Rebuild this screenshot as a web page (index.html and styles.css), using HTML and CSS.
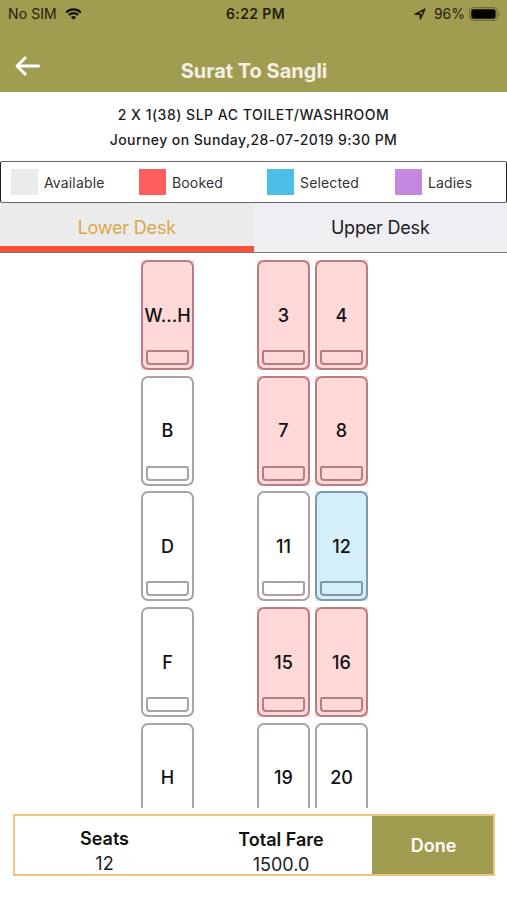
FILE: index.html
```html
<!DOCTYPE html>
<html lang="en">
<head>
    <meta charset="UTF-8" />
    <meta name="viewport" content="width=device-width, initial-scale=1.0" />
    <title>Surat To Sangli</title>
    <link rel="stylesheet" href="styles.css">
</head>
<body>
<div class="header">
    <div class="status-bar">
        <div class="status-left">
            <span class="carrier">No SIM</span>
            <svg class="wifi" viewBox="0 0 17 12" width="17" height="12">
                <path d="M1.2 4.4a10.4 10.4 0 0 1 14.6 0M3.8 7.1a6.7 6.7 0 0 1 9.4 0" fill="none" stroke="#11110a" stroke-width="2.1"/>
                <path d="M8.5 11.8L5.9 9.2a3.7 3.7 0 0 1 5.2 0z" fill="#11110a"/>
            </svg>
        </div>
        <div class="clock">6:22 PM</div>
        <div class="status-right">
            <svg class="location" viewBox="0 0 12 12" width="12" height="12">
                <path d="M1.2 6.1L10.8 1.2 6.4 10.8 6.1 6.1z" fill="none" stroke="#22220f" stroke-width="1.6" stroke-linejoin="round"/>
            </svg>
            <span class="percent">96%</span>
            <svg class="battery" viewBox="0 0 32 14" width="32" height="14">
                <rect x=".6" y=".6" width="27.6" height="12.8" rx="3.6" fill="none" stroke="#6f6c38" stroke-width="1.1"/>
                <rect x="2.2" y="2.3" width="24.4" height="9.4" rx="2" fill="#050503"/>
                <path d="M29.5 4.7a2.5 2.5 0 0 1 0 4.6z" fill="#6f6c38"/>
            </svg>
        </div>
    </div>
    <div class="nav-bar">
        <svg class="back" viewBox="0 0 26 20" width="26" height="20">
            <path d="M23.6 10H2.6M10.2 1.9L2 10l8.2 8.1" fill="none" stroke="#fff" stroke-width="2.9" stroke-linecap="round" stroke-linejoin="round"/>
        </svg>
        <h1>Surat To Sangli</h1>
    </div>
</div>

<div class="trip">
    <p class="bus-type">2 X 1(38) SLP AC TOILET/WASHROOM</p>
    <p class="journey">Journey on Sunday,28-07-2019 9:30 PM</p>
</div>

<div class="legend">
    <div class="legend-item"><span class="swatch available"></span>Available</div>
    <div class="legend-item"><span class="swatch booked"></span>Booked</div>
    <div class="legend-item"><span class="swatch selected"></span>Selected</div>
    <div class="legend-item"><span class="swatch ladies"></span>Ladies</div>
</div>

<div class="tabs">
    <div class="tab active">Lower Desk</div>
    <div class="tab">Upper Desk</div>
</div>

<div class="deck">
    <div class="seats">
        <div class="seat is-booked"><span>W...H</span></div>
        <div class="aisle"></div>
        <div class="seat is-booked"><span>3</span></div>
        <div class="seat is-booked"><span>4</span></div>

        <div class="seat"><span>B</span></div>
        <div class="aisle"></div>
        <div class="seat is-booked"><span>7</span></div>
        <div class="seat is-booked"><span>8</span></div>

        <div class="seat"><span>D</span></div>
        <div class="aisle"></div>
        <div class="seat"><span>11</span></div>
        <div class="seat is-selected"><span>12</span></div>

        <div class="seat"><span>F</span></div>
        <div class="aisle"></div>
        <div class="seat is-booked"><span>15</span></div>
        <div class="seat is-booked"><span>16</span></div>

        <div class="seat"><span>H</span></div>
        <div class="aisle"></div>
        <div class="seat"><span>19</span></div>
        <div class="seat"><span>20</span></div>
    </div>
</div>

<div class="summary">
    <div class="summary-item seats-count">
        <strong>Seats</strong>
        <span>12</span>
    </div>
    <div class="summary-item fare">
        <strong>Total Fare</strong>
        <span>1500.0</span>
    </div>
    <button type="button" class="done-btn">Done</button>
</div>
</body>
</html>
```
FILE: styles.css
```css
*,
*::before,
*::after {
    box-sizing: border-box;
    margin: 0;
    padding: 0;
}

body {
    width: 507px;
    height: 900px;
    overflow: hidden;
    font-family: Inter, "Liberation Sans", sans-serif;
    background: #fff;
    color: #1c1c1e;
}

svg {
    display: block;
}

/* Header */
.header {
    height: 92px;
    background: #a09c50;
}

.status-bar {
    display: grid;
    grid-template-columns: 1fr auto 1fr;
    align-items: center;
    height: 27px;
    padding: 0 6px 0 8px;
    font-size: 14px;
    color: #22220f;
}

.status-left,
.status-right {
    display: flex;
    align-items: center;
}

.status-left {
    gap: 8px;
}

.carrier {
    letter-spacing: 0.1px;
}

.status-right {
    justify-content: flex-end;
}

.location {
    margin-right: 8px;
}

.battery {
    margin-left: 4px;
}

.clock {
    padding-left: 2px;
    font-weight: 600;
    letter-spacing: 0.4px;
}

.nav-bar {
    display: grid;
    grid-template-columns: 60px 1fr 60px;
    height: 65px;
}

.back {
    margin: 29px 0 0 15px;
}

h1 {
    margin-top: 31px;
    padding-left: 1px;
    text-align: center;
    font-size: 20px;
    line-height: 26px;
    font-weight: 700;
    color: #f6efe6;
}

/* Trip details */
.trip {
    height: 69px;
    padding-top: 11px;
    text-align: center;
    font-size: 14px;
    font-weight: 500;
    line-height: 24.5px;
}

.bus-type {
    letter-spacing: 0.5px;
}

.journey {
    letter-spacing: 0.42px;
}

/* Legend */
.legend {
    display: grid;
    grid-template-columns: repeat(4, 128px);
    align-items: center;
    height: 42px;
    padding-left: 10px;
    border: 1px solid #66666a;
    border-left-color: #222;
    border-right-color: #222;
    border-radius: 2px;
    overflow: hidden;
}

.legend-item {
    display: flex;
    align-items: center;
    gap: 6px;
    font-size: 14px;
    letter-spacing: 0.15px;
    color: #333;
}

.swatch {
    width: 27px;
    height: 26px;
}

.available { background: #ebebeb; }
.booked { background: #ff5e5e; }
.selected { background: #4dbee8; }
.ladies { background: #c588e2; }

/* Tabs */
.tabs {
    display: flex;
    height: 50px;
    border-bottom: 1px solid #77777c;
    background: #efeef3;
}

.tab {
    flex: 1;
    text-align: center;
    font-size: 18px;
    letter-spacing: -0.2px;
    line-height: 49px;
    color: #1c1c1e;
}

.tab.active {
    background: #ebebeb;
    border-bottom: 6px solid #f8503a;
    color: #dca747;
}

/* Seat map */
.deck {
    height: 555px;
    padding: 7px 0 0 141px;
    overflow: hidden;
}

.seats {
    display: grid;
    grid-template-columns: 53px 53px 53px 53px;
    grid-auto-rows: 110px;
    column-gap: 5px;
    row-gap: 5.7px;
}

.seat {
    position: relative;
    display: flex;
    align-items: center;
    justify-content: center;
    font-size: 18px;
    font-weight: 500;
    color: #111;
}

/* Berth outline */
.seat::before {
    content: "";
    position: absolute;
    inset: 0;
    border: 2px solid #aba2a6;
    border-radius: 7px;
}

/* Pillow at the foot of each berth */
.seat::after {
    content: "";
    position: absolute;
    left: 5px;
    right: 5px;
    bottom: 5px;
    height: 15px;
    border: 2px solid #aba2a6;
    border-radius: 2px 2px 4px 4px;
}

.seat.is-booked {
    background: #ffd8d8;
}

.seat.is-booked::before,
.seat.is-booked::after {
    border-color: #b87d83;
}

.seat.is-selected {
    background: #d4eefa;
}

.seat.is-selected::before,
.seat.is-selected::after {
    border-color: #8298a9;
}

/* Bottom bar */
.summary {
    display: grid;
    grid-template-columns: 179px 1fr 121px;
    grid-template-rows: 58px;
    height: 62px;
    margin: 6px 12px 0 13px;
    border: 2px solid #ecc67f;
}

.summary-item {
    display: flex;
    flex-direction: column;
    align-items: center;
    font-size: 18px;
    line-height: 25px;
}

.summary-item strong {
    font-weight: 600;
    color: #111;
}

.seats-count {
    padding-top: 10px;
}

.fare {
    padding: 11px 4px 0 0;
}

.done-btn {
    padding-left: 2px;
    border: none;
    background: #a09c50;
    color: #fff;
    font-family: inherit;
    font-size: 18px;
    font-weight: 600;
}
```
